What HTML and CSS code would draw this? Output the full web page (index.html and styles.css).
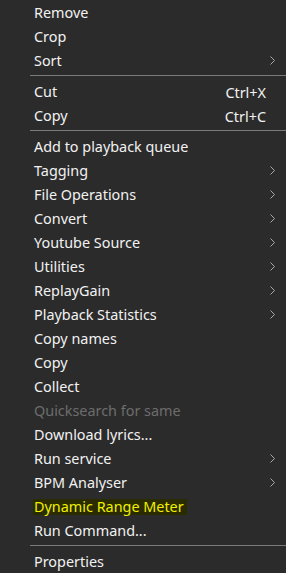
FILE: index.html
```html
<!DOCTYPE html>
<html>
<head>
<meta charset="utf-8">
<link rel="stylesheet" href="styles.css">
</head>
<body>
<div class="menu">
  <div class="item"><span class="label">Remove</span></div>
  <div class="item"><span class="label">Crop</span></div>
  <div class="item"><span class="label">Sort</span><svg class="chev" width="5" height="9" viewBox="0 0 5 9"><polyline points="0.5,0.5 4.5,4.5 0.5,8.5" /></svg></div>
  <div class="sep"></div>
  <div class="item"><span class="label">Cut</span><span class="key">Ctrl+X</span></div>
  <div class="item"><span class="label">Copy</span><span class="key">Ctrl+C</span></div>
  <div class="sep"></div>
  <div class="item"><span class="label">Add to playback queue</span></div>
  <div class="item"><span class="label">Tagging</span><svg class="chev" width="5" height="9" viewBox="0 0 5 9"><polyline points="0.5,0.5 4.5,4.5 0.5,8.5" /></svg></div>
  <div class="item"><span class="label">File Operations</span><svg class="chev" width="5" height="9" viewBox="0 0 5 9"><polyline points="0.5,0.5 4.5,4.5 0.5,8.5" /></svg></div>
  <div class="item"><span class="label">Convert</span><svg class="chev" width="5" height="9" viewBox="0 0 5 9"><polyline points="0.5,0.5 4.5,4.5 0.5,8.5" /></svg></div>
  <div class="item"><span class="label">Youtube Source</span><svg class="chev" width="5" height="9" viewBox="0 0 5 9"><polyline points="0.5,0.5 4.5,4.5 0.5,8.5" /></svg></div>
  <div class="item"><span class="label">Utilities</span><svg class="chev" width="5" height="9" viewBox="0 0 5 9"><polyline points="0.5,0.5 4.5,4.5 0.5,8.5" /></svg></div>
  <div class="item"><span class="label">ReplayGain</span><svg class="chev" width="5" height="9" viewBox="0 0 5 9"><polyline points="0.5,0.5 4.5,4.5 0.5,8.5" /></svg></div>
  <div class="item"><span class="label">Playback Statistics</span><svg class="chev" width="5" height="9" viewBox="0 0 5 9"><polyline points="0.5,0.5 4.5,4.5 0.5,8.5" /></svg></div>
  <div class="item"><span class="label">Copy names</span></div>
  <div class="item"><span class="label">Copy</span></div>
  <div class="item"><span class="label">Collect</span></div>
  <div class="item disabled"><span class="label">Quicksearch for same</span></div>
  <div class="item"><span class="label">Download lyrics...</span></div>
  <div class="item"><span class="label">Run service</span><svg class="chev" width="5" height="9" viewBox="0 0 5 9"><polyline points="0.5,0.5 4.5,4.5 0.5,8.5" /></svg></div>
  <div class="item"><span class="label">BPM Analyser</span><svg class="chev" width="5" height="9" viewBox="0 0 5 9"><polyline points="0.5,0.5 4.5,4.5 0.5,8.5" /></svg></div>
  <div class="item"><span class="label hl">Dynamic Range Meter</span></div>
  <div class="item"><span class="label">Run Command...</span></div>
  <div class="sep"></div>
  <div class="item"><span class="label">Properties</span></div>
</div>
</body>
</html>
```
FILE: styles.css
```css
html, body {
  margin: 0;
  padding: 0;
  background: #2b2b2b;
}
.menu {
  width: 286px;
  height: 573px;
  overflow: hidden;
  background: #2b2b2b;
  font-family: "Noto Sans", "Open Sans", sans-serif;
  font-size: 14.4px;
  color: #f2f2f2;
}
.item {
  height: 24px;
  display: flex;
  align-items: center;
  padding-left: 34px;
  padding-right: 11px;
  position: relative;
}
.label {
  flex: 1;
  white-space: nowrap;
  line-height: 24px;
  position: relative;
  top: 1px;
}
.label.hl {
  flex: 0 0 auto;
  color: #f0f000;
  background: #2b2b00;
  line-height: 16px;
  padding: 0 3px 0 1px;
  margin-left: -1px;
}
.key {
  margin-right: 9px;
  white-space: nowrap;
  position: relative;
  top: 1px;
}
.disabled .label {
  color: #6d6d6d;
}
.chev {
  fill: none;
  stroke: #a8a8a8;
  stroke-width: 1;
}
.sep {
  height: 7px;
  display: flex;
  align-items: center;
  padding-left: 30px;
}
.sep::before {
  content: "";
  flex: 1;
  height: 1px;
  background: #7a7a7a;
}
```
